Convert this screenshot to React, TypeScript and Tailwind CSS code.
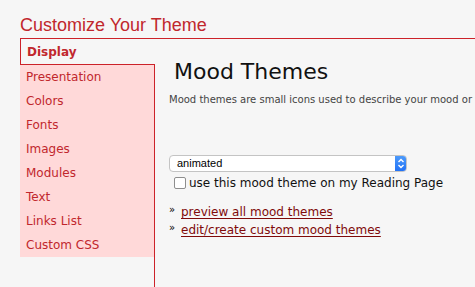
import React from "react";

const tabs = [
    "Presentation",
    "Colors",
    "Fonts",
    "Images",
    "Modules",
    "Text",
    "Links List",
    "Custom CSS",
];

const links = ["preview all mood themes", "edit/create custom mood themes"];

const App: React.FC = () => {
    return (
        <div className="w-[475px] h-[287px] overflow-hidden bg-[#f6f6f6] flex flex-col font-['DejaVu_Sans',sans-serif]">
            <h1 className="mt-[15px] ml-[20px] h-[23px] text-[18px] leading-[21px] text-[#c1272d] font-['Liberation_Sans',Arial,sans-serif]">
                Customize Your Theme
            </h1>
            <div className="ml-[20px] flex flex-1 border-t border-[#cc2229]">
                <div className="w-[135px] flex flex-col">
                    <div className="h-[26px] border-l border-b border-[#cc2229] pl-[6px] flex items-center text-[12px] font-bold text-[#c1272d]">
                        Display
                    </div>
                    <div className="flex-1 border-r border-[#cc2229]">
                        <ul className="bg-[#ffd9d9]">
                            {tabs.map((t) => (
                                <li
                                    key={t}
                                    className="h-[24px] pl-[6px] flex items-center text-[12px] text-[#c1272d]"
                                >
                                    {t}
                                </li>
                            ))}
                        </ul>
                    </div>
                </div>
                <div className="flex-1 min-w-0 pl-[14px] flex flex-col">
                    <h2 className="mt-[20px] ml-[5px] text-[22px] leading-[26px] text-[#111]">
                        Mood Themes
                    </h2>
                    <p className="mt-[9px] text-[10px] leading-[12px] text-[#444] whitespace-nowrap">
                        Mood themes are small icons used to describe your mood or
                    </p>
                    <div className="mt-[49px] w-[238px] h-[17px] flex rounded-[4px] bg-white border border-[#c4c4c4] overflow-hidden">
                        <span className="flex-1 pl-[7px] text-[11px] leading-[15px] text-black font-['Liberation_Sans',Arial,sans-serif]">
                            animated
                        </span>
                        <span className="w-[12px] -my-px -mr-px flex items-center justify-center bg-gradient-to-b from-[#4f9cfb] to-[#1f6ff5] rounded-r-[4px]">
                            <svg width="8" height="11" viewBox="0 0 8 11" fill="none" stroke="white" strokeWidth="1.4">
                                <path d="M1.5 4 L4 1.5 L6.5 4" />
                                <path d="M1.5 7 L4 9.5 L6.5 7" />
                            </svg>
                        </span>
                    </div>
                    <label className="mt-[4px] ml-[5px] h-[14px] flex items-center gap-[3px] text-[12px] text-[#111]">
                        <span className="w-[12px] h-[12px] rounded-[2px] border border-[#8e8e8e] bg-white" />
                        use this mood theme on my Reading Page
                    </label>
                    <ul className="mt-[13px] flex flex-col">
                        {links.map((l) => (
                            <li key={l} className="h-[18px] flex items-center gap-[4px]">
                                <span className="w-[8px] text-[10px] leading-[10px] text-black -mt-[4px]">»</span>
                                <a className="text-[12px] text-[#800a0a] underline underline-offset-[2px] decoration-[#800a0a]">
                                    {l}
                                </a>
                            </li>
                        ))}
                    </ul>
                </div>
            </div>
        </div>
    );
};

export default App;
